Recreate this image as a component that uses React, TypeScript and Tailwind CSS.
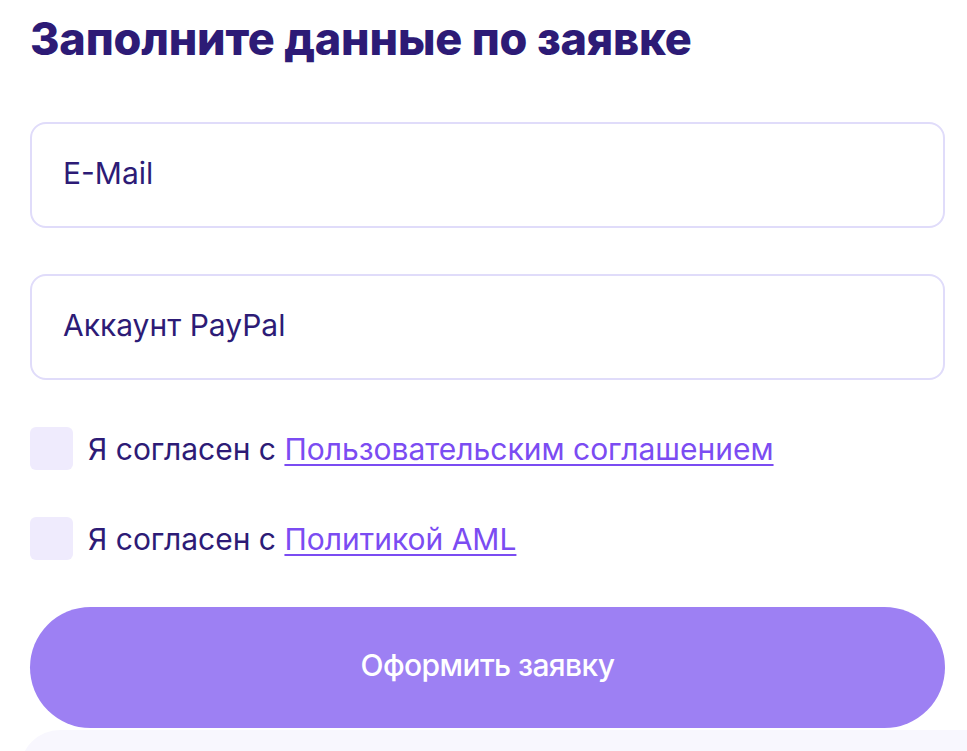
import React, { useState } from 'react';

export default function App() {
  const [agreeTerms, setAgreeTerms] = useState(false);
  const [agreeAml, setAgreeAml] = useState(false);

  return (
    <div className="min-h-screen w-[967px] h-[751px] overflow-hidden bg-white" style={{ fontFamily: 'Inter, "Noto Sans", sans-serif' }}>
      <div className="ml-[30px] w-[915px] flex flex-col">
        {/* TITLE */}
        <h1 className="mt-[12px] text-[45px] leading-[54px] font-extrabold text-[#2d1b76] tracking-[-0.2px]">
          Заполните данные по заявке
        </h1>

        {/* FIELDS */}
        <div className="mt-[56px] flex flex-col gap-[46px]">
          <input
            type="text"
            placeholder="E-Mail"
            className="h-[106px] w-full rounded-[16px] border-2 border-[#e0dcfa] bg-white pl-[31px] pr-[32px] pb-[5px] text-[30px] text-[#2d1b76] placeholder:text-[#2d1b76] focus:outline-none"
          />
          <input
            type="text"
            placeholder="Аккаунт PayPal"
            className="h-[106px] w-full rounded-[16px] border-2 border-[#e0dcfa] bg-white pl-[31px] pr-[32px] pb-[5px] text-[30px] text-[#2d1b76] placeholder:text-[#2d1b76] focus:outline-none"
          />
        </div>

        {/* AGREEMENTS */}
        <div className="mt-[47px] flex flex-col gap-[47px]">
          <label className="flex items-center gap-[15px] cursor-pointer">
            <button
              onClick={() => setAgreeTerms(!agreeTerms)}
              className={`h-[43px] w-[43px] shrink-0 rounded-[6px] ${agreeTerms ? 'bg-[#9d80f3]' : 'bg-[#efebfd]'}`}
            />
            <span className="text-[30px] leading-[40px] text-[#2d1b76]">
              Я согласен с <a href="#" className="text-[#7b4cf2] underline underline-offset-[4px] decoration-2">Пользовательским соглашением</a>
            </span>
          </label>
          <label className="flex items-center gap-[15px] cursor-pointer">
            <button
              onClick={() => setAgreeAml(!agreeAml)}
              className={`h-[43px] w-[43px] shrink-0 rounded-[6px] ${agreeAml ? 'bg-[#9d80f3]' : 'bg-[#efebfd]'}`}
            />
            <span className="text-[30px] leading-[40px] text-[#2d1b76]">
              Я согласен с <a href="#" className="text-[#7b4cf2] underline underline-offset-[4px] decoration-2">Политикой AML</a>
            </span>
          </label>
        </div>

        {/* SUBMIT */}
        <button className="mt-[47px] h-[121px] w-full rounded-full bg-[#9d80f3] pb-[4px] text-[30px] font-medium text-white tracking-[-0.6px]">
          Оформить заявку
        </button>
      </div>

      {/* NEXT PANEL */}
      <div className="ml-[20px] mt-[2px] h-[40px] rounded-tl-[40px] bg-[#f8f7fe]" />
    </div>
  );
}
